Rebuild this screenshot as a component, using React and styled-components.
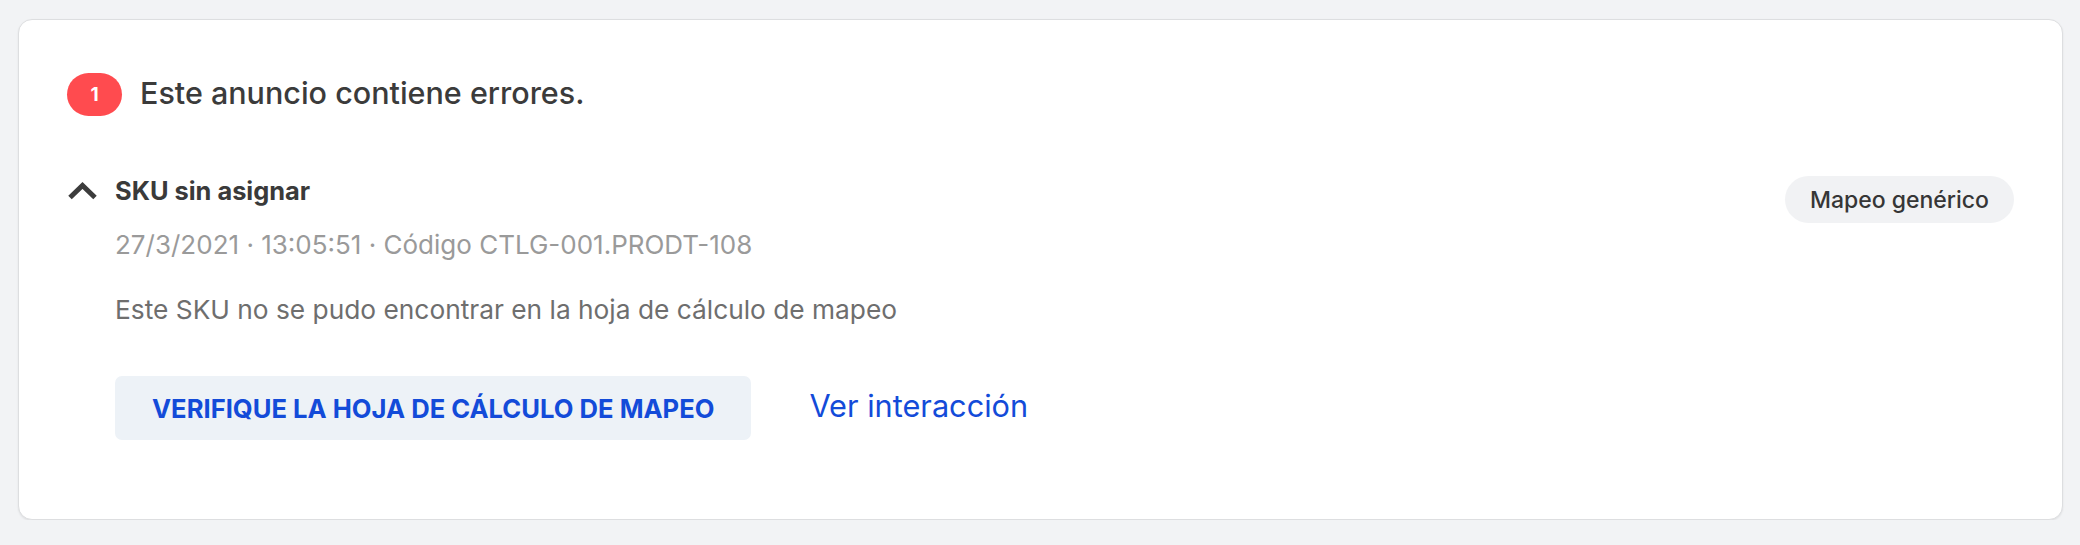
import styled, { createGlobalStyle } from "styled-components";

const GlobalStyle = createGlobalStyle`
  body {
    margin: 0;
    background-color: #f2f3f5;
    font-family: Inter, "Liberation Sans", sans-serif;
  }
`;

const errors = [
  {
    title: "SKU sin asignar",
    date: "27/3/2021",
    time: "13:05:51",
    code: "CTLG-001.PRODT-108",
    description: "Este SKU no se pudo encontrar en la hoja de cálculo de mapeo",
    action: "VERIFIQUE LA HOJA DE CÁLCULO DE MAPEO",
    link: "Ver interacción",
    tag: "Mapeo genérico",
  },
];

function ChevronUp() {
  return (
    <svg width="31" height="20" viewBox="0 0 31 20">
      <polyline
        points="3,16.5 15.5,4.5 28,16.5"
        fill="none"
        stroke="#3c3c3c"
        strokeWidth="5"
      />
    </svg>
  );
}

function ErrorItem({ error }) {
  return (
    <Item>
      <ItemMain>
        <TitleRow>
          <ChevronUp />
          <ItemTitle>{error.title}</ItemTitle>
        </TitleRow>
        <Meta>
          {error.date} · {error.time} · Código {error.code}
        </Meta>
        <Description>{error.description}</Description>
        <Actions>
          <ActionButton>{error.action}</ActionButton>
          <LinkButton>{error.link}</LinkButton>
        </Actions>
      </ItemMain>
      <Tag>{error.tag}</Tag>
    </Item>
  );
}

export default function App() {
  return (
    <>
      <GlobalStyle />
      <Page>
        <Card>
          <Header>
            <CountBadge>{errors.length}</CountBadge>
            <Heading>Este anuncio contiene errores.</Heading>
          </Header>
          {errors.map((error) => (
            <ErrorItem key={error.code} error={error} />
          ))}
        </Card>
      </Page>
    </>
  );
}

const Page = styled.div`
  padding: 19px 17px 0 18px;
`;

const Card = styled.div`
  background-color: #ffffff;
  border: 1px solid #dddee0;
  border-radius: 14px;
  box-shadow: 0 1px 2px rgba(0, 0, 0, 0.08);
  padding: 53px 48px 79px 48px;
`;

const Header = styled.div`
  display: flex;
  align-items: center;
  gap: 18px;
`;

const CountBadge = styled.span`
  width: 55px;
  height: 43px;
  border-radius: 22px;
  background-color: #ff4b4f;
  color: #ffffff;
  font-size: 19px;
  font-weight: 700;
  display: flex;
  align-items: center;
  justify-content: center;
`;

const Heading = styled.h2`
  margin: 0 0 3px;
  font-size: 30.5px;
  font-weight: 500;
  color: #3b3b3b;
  line-height: 36px;
`;

const Item = styled.div`
  display: flex;
  justify-content: space-between;
  align-items: flex-start;
  margin-top: 60px;
`;

const ItemMain = styled.div`
  display: flex;
  flex-direction: column;
  align-items: flex-start;
`;

const TitleRow = styled.div`
  display: flex;
  align-items: center;
  gap: 17px;
  height: 30px;
`;

const ItemTitle = styled.span`
  font-size: 25.4px;
  font-weight: 700;
  color: #3a3a3a;
  line-height: 30px;
`;

const Meta = styled.div`
  margin: 23px 0 0 48px;
  font-size: 26px;
  line-height: 32px;
  color: #9a9a9a;
`;

const Description = styled.p`
  margin: 32px 0 0 48px;
  font-size: 26.3px;
  line-height: 34px;
  color: #6e6e6e;
`;

const Actions = styled.div`
  display: flex;
  align-items: center;
  gap: 58px;
  margin: 49px 0 0 48px;
`;

const ActionButton = styled.button`
  height: 64px;
  padding: 0 37px;
  border: none;
  border-radius: 7px;
  background-color: #edf2f7;
  color: #134bd9;
  font-family: Inter, "Liberation Sans", sans-serif;
  font-size: 25.6px;
  font-weight: 700;
  cursor: pointer;
`;

const LinkButton = styled.a`
  margin-bottom: 5px;
  font-size: 30.7px;
  color: #134bd9;
  text-decoration: none;
  cursor: pointer;
`;

const Tag = styled.span`
  height: 47px;
  padding: 0 25px;
  border-radius: 24px;
  background-color: #f1f2f4;
  color: #363636;
  font-size: 23px;
  font-weight: 500;
  display: flex;
  align-items: center;
`;
